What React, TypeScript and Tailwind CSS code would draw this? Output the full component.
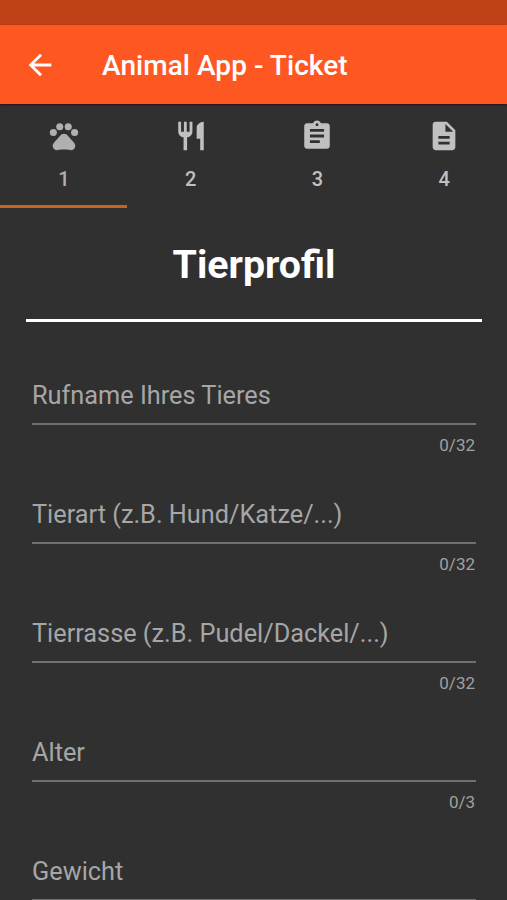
import React from 'react';
import { MdArrowBack, MdPets, MdAssignment, MdDescription, MdRestaurant } from 'react-icons/md';

const tabs = [
  { n: '1', icon: <MdPets size={34} /> },
  { n: '2', icon: <MdRestaurant size={34} /> },
  { n: '3', icon: <MdAssignment size={34} /> },
  { n: '4', icon: <MdDescription size={34} /> },
];

const fields = [
  { label: 'Rufname Ihres Tieres', count: '0/32' },
  { label: 'Tierart (z.B. Hund/Katze/...)', count: '0/32' },
  { label: 'Tierrasse (z.B. Pudel/Dackel/...)', count: '0/32' },
  { label: 'Alter', count: '0/3' },
  { label: 'Gewicht', count: '' },
];

export default function App() {
  return (
    <div className="h-[900px] w-[507px] overflow-hidden bg-[#303030] font-['Roboto',sans-serif]">
      <div className="h-[25px] bg-[#bf4118]" />
      <header className="flex h-[79px] items-center bg-[#ff5722] pl-[23px] text-white shadow-[0_1px_2px_rgba(40,0,0,0.7)]">
        <MdArrowBack size={34} />
        <h1 className="ml-[45px] pt-0.5 text-[28px] font-medium tracking-[0.05px]">Animal App - Ticket</h1>
      </header>
      <nav className="grid h-[104px] grid-cols-4">
        {tabs.map((t, i) => (
          <div
            key={t.n}
            className={`flex flex-col items-center border-b-[3px] pt-[15px] pl-px ${i === 0 ? 'border-[#c8631f] text-[#b0b0b0]' : 'border-transparent text-[#c0c0c0]'}`}
          >
            {t.icon}
            <span className="mt-[11px] text-xl leading-[30px] font-medium">{t.n}</span>
          </div>
        ))}
      </nav>
      <main className="pr-[25px] pl-[26px]">
        <h2 className="h-[114px] border-b-[3px] border-white pt-[29px] text-center text-[39.3px] leading-[56px] font-bold text-white">
          Tierprofil
        </h2>
        <div className="px-[6px] pt-[53px]">
          {fields.map((f) => (
            <div key={f.label} className="h-[119px]">
              <div className="h-[50px] border-b-2 border-[#707070] text-[25.3px] leading-[42px] text-[#a6a6a6]">{f.label}</div>
              <div className="pt-[7px] pr-px text-right text-[17px] leading-[26px] text-[#a0a0a0]">{f.count}</div>
            </div>
          ))}
        </div>
      </main>
    </div>
  );
}
